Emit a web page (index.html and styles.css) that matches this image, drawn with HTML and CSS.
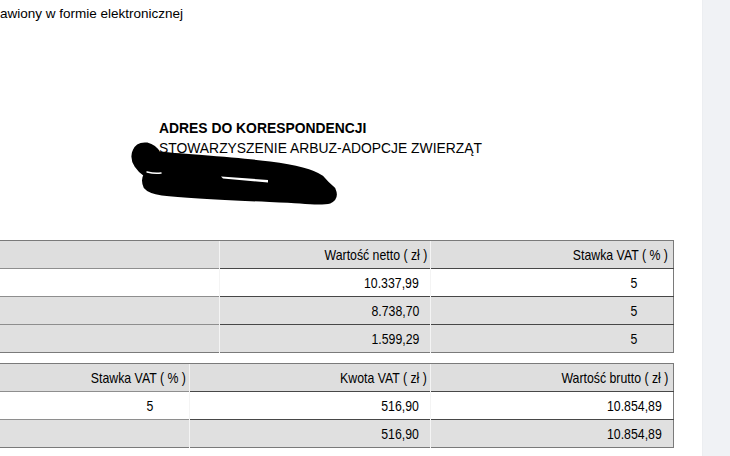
FILE: index.html
```html
<!DOCTYPE html>
<html lang="pl">
<head>
<meta charset="utf-8">
<title>Faktura</title>
<link rel="stylesheet" href="styles.css">
</head>
<body>
<div class="screen">
  <main class="doc">
    <p class="intro">awiony w formie elektronicznej</p>
    <section class="address">
      <h2 class="addr-title"><span>ADRES DO KORESPONDENCJI</span></h2>
      <p class="addr-name"><span>STOWARZYSZENIE ARBUZ-ADOPCJE ZWIERZĄT</span></p>
      <svg class="scribble" width="360" height="110" viewBox="0 0 360 110" aria-hidden="true">
        <g transform="translate(0,-118)">
          <path d="M134,151 Q137,143 147,144 Q155,146 159,153 C190,156 240,159 270,163 C295,166 312,170 322,177 Q328,184 334,189 Q338,198 330,202 Q322,204 300,202 C260,200 200,198 162,194 Q149,192 145,187 Q142,180 145,175 Q140,172 136,166 Q131,158 134,151 Z" fill="#000" stroke="#000" stroke-width="3" stroke-linejoin="round"/>
          <path d="M221,176.5 L268,180 L268,182.5 L223,178.5 Z" fill="#fff"/>
          <path d="M147,172 Q155,174 161,173" fill="none" stroke="#fff" stroke-width="1.5" stroke-linecap="round"/>
        </g>
      </svg>
    </section>

    <table class="tbl t1">
      <colgroup><col class="c1a"><col class="c1b"><col class="c1c"></colgroup>
      <tr class="head">
        <th class="a"></th>
        <th><span>Wartość netto ( zł )</span></th>
        <th class="last"><span>Stawka VAT ( % )</span></th>
      </tr>
      <tr>
        <td class="a"></td>
        <td class="num"><span>10.337,99</span></td>
        <td class="vat"><span>5</span></td>
      </tr>
      <tr class="grey">
        <td class="a"></td>
        <td class="num"><span>8.738,70</span></td>
        <td class="vat"><span>5</span></td>
      </tr>
      <tr class="grey">
        <td class="a"></td>
        <td class="num"><span>1.599,29</span></td>
        <td class="vat"><span>5</span></td>
      </tr>
    </table>

    <table class="tbl t2">
      <colgroup><col class="c2a"><col class="c2b"><col class="c2c"></colgroup>
      <tr class="head">
        <th class="a"><span>Stawka VAT ( % )</span></th>
        <th><span>Kwota VAT ( zł )</span></th>
        <th class="last"><span>Wartość brutto ( zł )</span></th>
      </tr>
      <tr>
        <td class="a vat"><span>5</span></td>
        <td class="num"><span>516,90</span></td>
        <td class="num"><span>10.854,89</span></td>
      </tr>
      <tr class="grey">
        <td class="a"></td>
        <td class="num"><span>516,90</span></td>
        <td class="num"><span>10.854,89</span></td>
      </tr>
    </table>
  </main>
  <aside class="side"></aside>
</div>
</body>
</html>
```
FILE: styles.css
```css
html, body {
  margin: 0;
  padding: 0;
  background: #fff;
}
body {
  font-family: "Liberation Sans", Arial, sans-serif;
  color: #000;
  overflow: hidden;
}
.screen {
  display: flex;
  height: 456px;
  width: 730px;
}
.doc {
  flex: 1;
  min-width: 0;
  overflow: hidden;
}
.side {
  width: 27px;
  background: #f0f2f5;
  border-left: 1px solid #eceef1;
}
.intro {
  margin: 0;
  padding-top: 6px;
  font-size: 13.5px;
  line-height: 16px;
  white-space: nowrap;
}
.address {
  position: relative;
  margin-top: 96px;
  padding-left: 159px;
}
.address span {
  display: inline-block;
  white-space: nowrap;
  transform: scaleX(0.925);
  transform-origin: left center;
}
.scribble {
  position: absolute;
  left: 0;
  top: 0;
}
.addr-title {
  margin: 0;
  font-size: 15px;
  line-height: 20px;
  font-weight: bold;
}
.addr-name {
  margin: 0;
  font-size: 15px;
  line-height: 20px;
}
.tbl {
  border-collapse: collapse;
  table-layout: fixed;
  margin-left: -2px;
  width: 675px;
  font-size: 15px;
  border: 1px solid #7a7a7a;
}
.tbl span {
  display: inline-block;
  transform: scaleX(0.82);
  transform-origin: right center;
}
.t1 { margin-top: 82px; }
.t2 { margin-top: 10px; }
.c1a { width: 221px; }
.c1b { width: 211px; }
.c1c { width: 243px; }
.c2a { width: 191px; }
.c2b { width: 241px; }
.c2c { width: 243px; }
.tbl th, .tbl td {
  height: 27px;
  padding: 0 3px 0 0;
  text-align: right;
  vertical-align: middle;
  font-weight: normal;
  white-space: nowrap;
  line-height: 18px;
  border-top: 1px solid #474747;
  border-left: 1px solid #f4f4f4;
}
.tbl .a {
  border-top-color: #8e8e8e;
}
.tbl th.last {
  padding-right: 5px;
}
.tbl .head th {
  background: #dedede;
  border-top-color: #7a7a7a;
}
.tbl .grey td {
  background: #e0e0e0;
}
.tbl td.num {
  padding-right: 11px;
}
.tbl td.vat {
  padding-right: 36px;
}
```
